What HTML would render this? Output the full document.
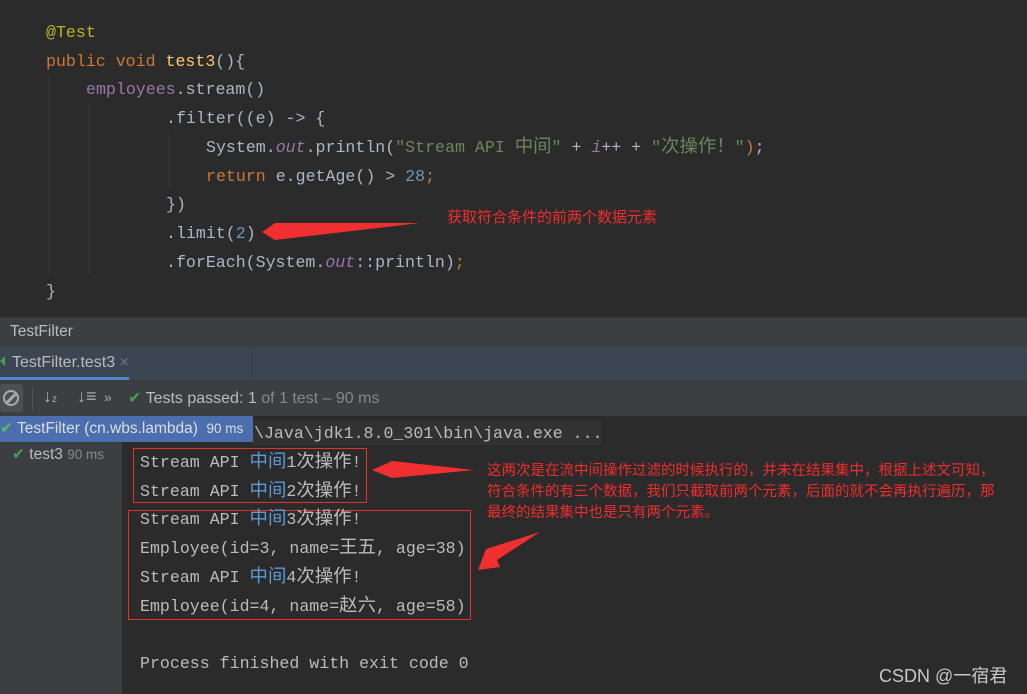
<!DOCTYPE html>
<html><head><meta charset="utf-8"><style>
*{margin:0;padding:0;box-sizing:border-box}
body{width:1027px;height:694px;overflow:hidden;background:#2b2b2b;position:relative;font-family:"Liberation Mono","Noto Sans CJK SC",monospace}
.a{position:absolute;white-space:pre}
.code{font-size:16.6px;color:#a9b7c6;line-height:22px}
.k{color:#cc7832}.an{color:#bbb529}.fn{color:#ffc66d}.f{color:#9876aa}.s{color:#6a8759}.n{color:#6897bb}.it{font-style:italic;color:#9876aa}
.ui{font-family:"Liberation Sans","Noto Sans CJK SC",sans-serif}
.red{color:#f02c2c;font-family:"Liberation Sans","Noto Sans CJK SC",sans-serif;font-size:14.5px}
.con{font-size:16.6px;color:#bbbbbb;line-height:22px}
.cj{color:#5a9bd5}
.z{font-size:18.4px}
</style></head><body>
<!-- editor -->
<div class="a" style="left:49px;top:75px;width:1px;height:200px;background:#3a3a3a"></div>
<div class="a" style="left:89px;top:104px;width:1px;height:170px;background:#3a3a3a"></div>
<div class="a" style="left:169px;top:132px;width:1px;height:58px;background:#3a3a3a"></div>
<div class="a code" style="left:46px;top:22px"><span class="an">@Test</span></div>
<div class="a code" style="left:46px;top:51px"><span class="k">public void </span><span class="fn">test3</span>(){</div>
<div class="a code" style="left:86px;top:79px"><span class="f">employees</span>.stream()</div>
<div class="a code" style="left:166px;top:108px">.filter((e) -&gt; {</div>
<div class="a code" style="left:206px;top:137px">System.<span class="it">out</span>.println(<span class="s">"Stream API <span class="z">中间</span>"</span> + <span class="it">i</span>++ + <span class="s">"<span class="z">次操作！</span>"</span><span class="k">)</span>;</div>
<div class="a code" style="left:206px;top:166px"><span class="k">return </span>e.getAge() &gt; <span class="n">28</span><span class="k">;</span></div>
<div class="a code" style="left:166px;top:194px">})</div>
<div class="a code" style="left:166px;top:223px">.limit(<span class="n">2</span>)</div>
<div class="a code" style="left:166px;top:252px">.forEach(System.<span class="it">out</span>::println)<span class="k">;</span></div>
<div class="a code" style="left:46px;top:281px">}</div>
<svg class="a" style="left:0;top:0" width="1027" height="694">
<polygon points="262,232 275,223 420,223 275,240" fill="#f03030"/>
<polygon points="372,470 392,461 474,470 392,478" fill="#f03030"/>
<polygon points="478,570 486,549 540,532 497,560 500,567" fill="#f03030"/>
<rect x="133.5" y="448.5" width="233" height="54" fill="none" stroke="#e43030"/>
<rect x="128.5" y="510.5" width="342" height="109" fill="none" stroke="#e43030"/>
</svg>
<div class="a red" style="left:447px;top:206px;font-size:15px">获取符合条件的前两个数据元素</div>
<div class="a red" style="left:487px;top:461px;line-height:21px">这两次是在流中间操作过滤的时候执行的，并未在结果集中，根据上述文可知，
符合条件的有三个数据，我们只截取前两个元素，后面的就不会再执行遍历，那
最终的结果集中也是只有两个元素。</div>
<!-- panel -->
<div class="a" style="left:0;top:317px;width:1027px;height:30px;background:#3c3f41;border-top:1px solid #323232"></div>
<div class="a ui" style="left:10px;top:323px;font-size:15.5px;color:#bbbbbb">TestFilter</div>
<div class="a" style="left:0;top:347px;width:1027px;height:33px;background:#3c4653"></div>
<div class="a" style="left:251px;top:347px;width:1px;height:33px;background:#333c47"></div>
<div class="a" style="left:0;top:377px;width:129px;height:3px;background:#4a88c7"></div>
<div class="a ui" style="left:12px;top:354px;font-size:16px;color:#bbbbbb">TestFilter.test3 <span style="color:#777">×</span></div>
<div class="a" style="left:0;top:356px;width:5px;height:10px;background:#499c54;clip-path:polygon(0 50%,100% 0,100% 100%)"></div>
<div class="a" style="left:0;top:380px;width:1027px;height:36px;background:#3c3f41"></div>
<div class="a" style="left:0;top:384px;width:23px;height:28px;background:#4c5052;border-radius:3px"></div>
<div class="a" style="left:3px;top:390px;width:16px;height:16px;border:2.5px solid #aaa;border-radius:50%"></div>
<div class="a" style="left:5px;top:397px;width:12px;height:2.5px;background:#aaa;transform:rotate(-45deg)"></div>
<div class="a" style="left:32px;top:388px;width:1px;height:22px;background:#555"></div>
<div class="a ui" style="left:43px;top:386px;font-size:18px;color:#aaa">↓<span style="font-size:10px">z</span></div>
<div class="a ui" style="left:77px;top:386px;font-size:18px;color:#aaa">↓≡</div>
<div class="a ui" style="left:104px;top:389px;font-size:14px;color:#aaa">»</div>
<div class="a ui" style="left:128px;top:388px;font-size:16px;color:#bbbbbb"><span style="color:#499c54">✔</span> Tests passed: 1 <span style="color:#888">of 1 test – 90 ms</span></div>
<div class="a" style="left:0;top:416px;width:122px;height:278px;background:#3c3f41"></div>
<div class="a" style="left:252px;top:420px;width:349px;height:25px;background:#323232"></div>
<div class="a" style="left:0;top:416px;width:253px;height:26px;background:#4b6eaf"></div>
<div class="a ui" style="left:0;top:419px;font-size:15.5px;color:#ddd"><span style="color:#5fb85f">✔</span> TestFilter (cn.wbs.lambda)&nbsp; <span style="font-size:13.5px">90 ms</span></div>
<div class="a ui" style="left:12px;top:445px;font-size:15.5px;color:#bbb"><span style="color:#499c54">✔</span> test3 <span style="font-size:13.5px;color:#888">90 ms</span></div>
<!-- console -->
<div class="a con" style="left:254px;top:423px">\Java\jdk1.8.0_301\bin\java.exe ...</div>
<div class="a con" style="left:140px;top:452px">Stream API <span class="cj z">中间</span>1<span class="z">次操作</span>!</div>
<div class="a con" style="left:140px;top:481px">Stream API <span class="cj z">中间</span>2<span class="z">次操作</span>!</div>
<div class="a con" style="left:140px;top:509px">Stream API <span class="cj z">中间</span>3<span class="z">次操作</span>!</div>
<div class="a con" style="left:140px;top:538px">Employee(id=3, name=<span class="z">王五</span>, age=38)</div>
<div class="a con" style="left:140px;top:567px">Stream API <span class="cj z">中间</span>4<span class="z">次操作</span>!</div>
<div class="a con" style="left:140px;top:596px">Employee(id=4, name=<span class="z">赵六</span>, age=58)</div>
<div class="a con" style="left:140px;top:653px">Process finished with exit code 0</div>
<div class="a ui" style="left:879px;top:662px;font-size:18px;color:#c8c8c8">CSDN @一宿君</div>
</body></html>
